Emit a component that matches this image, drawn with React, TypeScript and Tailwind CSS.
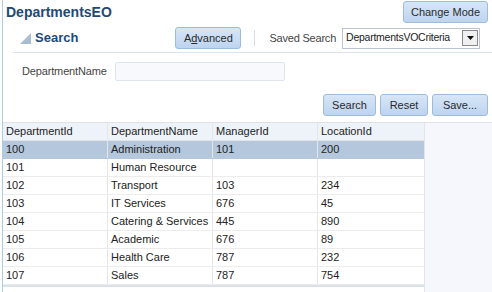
import React from "react";

const rows = [
  { id: "100", name: "Administration", mgr: "101", loc: "200" },
  { id: "101", name: "Human Resource", mgr: "", loc: "" },
  { id: "102", name: "Transport", mgr: "103", loc: "234" },
  { id: "103", name: "IT Services", mgr: "676", loc: "45" },
  { id: "104", name: "Catering & Services", mgr: "445", loc: "890" },
  { id: "105", name: "Academic", mgr: "676", loc: "89" },
  { id: "106", name: "Health Care", mgr: "787", loc: "232" },
  { id: "107", name: "Sales", mgr: "787", loc: "754" },
];

const btn =
  "rounded-[3px] border border-[#9dbcdc] bg-gradient-to-b from-[#d7e6f7] to-[#bdd4ef] text-[11px] text-[#2a2a2a] leading-none flex items-center justify-center";

function Cell({ children, last }: { children?: React.ReactNode; last?: boolean }) {
  return (
    <div className={`w-[105px] h-full flex items-center pl-[3px] ${last ? "" : "border-r border-[#e6e6e6]"}`}>
      {children}
    </div>
  );
}

export default function App() {
  return (
    <div
      className="w-[492px] h-[292px] overflow-hidden bg-white text-[#333] pl-[2px]"
      style={{ fontFamily: '"Liberation Sans", Arial, sans-serif' }}
    >
      <div className="h-full border-l border-[#a9cfe2] flex flex-col">
        {/* title row */}
        <div className="h-[26px] flex items-start justify-between pr-[4px] pt-[1px]">
          <div className="pl-[3px] pt-[3px] text-[14px] font-bold text-[#1f4a75] leading-[16px]">DepartmentsEO</div>
          <div className={`${btn} w-[85px] h-[22px]`}>Change Mode</div>
        </div>

        {/* search header */}
        <div className="h-[24px] flex items-center">
          <svg width="11" height="11" viewBox="0 0 11 11" className="ml-[17px] mt-[1px]">
            <polygon points="11,0 11,11 0,11" fill="#a8bdd3" />
          </svg>
          <span className="ml-[4px] text-[13px] font-bold text-[#1f4a75]">Search</span>
          <div className={`${btn} ml-[97px] w-[66px] h-[22px]`}>
            A<span className="underline">d</span>vanced
          </div>
          <div className="ml-[13px] w-px h-[16px] bg-[#d9dee4]" />
          <span className="ml-[14px] text-[11px] tracking-[-0.2px] text-[#444]">Saved Search</span>
          <div className="ml-[6px] w-[138px] h-[21px] border border-[#b9c4d0] bg-white flex items-center justify-between pl-[3px] pr-[1px]">
            <span className="text-[10.5px] tracking-[-0.25px] text-[#222] whitespace-nowrap">DepartmentsVOCriteria</span>
            <div className="w-[16px] h-[16px] shrink-0 border border-[#8a8a8a] bg-[#f0f0f0] flex items-center justify-center">
              <svg width="7" height="4" viewBox="0 0 7 4">
                <polygon points="0,0 7,0 3.5,4" fill="#111" />
              </svg>
            </div>
          </div>
        </div>

        <div className="ml-[10px] mt-[2px] h-px bg-[#dde3ea]" />

        {/* field */}
        <div className="mt-[9px] h-[19px] flex items-center">
          <span className="ml-[19px] text-[11px] tracking-[-0.15px] text-[#444]">DepartmentName</span>
          <div className="ml-[8px] w-[170px] h-[19px] rounded-[2px] border border-[#dfe5ec] bg-[#f7f9fc]" />
        </div>

        {/* action buttons */}
        <div className="mt-[13px] h-[22px] flex justify-end pr-[4px] gap-[4px]">
          <div className={`${btn} w-[53px] h-[22px]`}>Search</div>
          <div className={`${btn} w-[48px] h-[22px]`}>Reset</div>
          <div className={`${btn} w-[56px] h-[22px]`}>Save...</div>
        </div>

        {/* table */}
        <div className="mt-[6px] flex flex-1 border-t border-[#dfe3e8]">
          <div className="w-[421px] text-[11px] text-[#222]">
            <div className="h-[18px] flex bg-[#eef2f9] border-b border-[#e1e5ea]">
              <Cell>DepartmentId</Cell>
              <Cell>DepartmentName</Cell>
              <Cell>ManagerId</Cell>
              <Cell last>LocationId</Cell>
            </div>
            {rows.map((r, i) => (
              <div
                key={r.id}
                className={`h-[18px] flex border-b ${i === 0 ? "bg-[#b4c7dd] border-[#b4c7dd]" : "border-[#ececec]"}`}
              >
                <Cell>{r.id}</Cell>
                <Cell>{r.name}</Cell>
                <Cell>{r.mgr}</Cell>
                <Cell last>{r.loc}</Cell>
              </div>
            ))}
            <div className="h-[2px] bg-[#dbe1e8]" />
          </div>
          <div className="flex-1 bg-[#f5f7fc] border-l border-[#e1e5ea]" />
        </div>
      </div>
    </div>
  );
}
